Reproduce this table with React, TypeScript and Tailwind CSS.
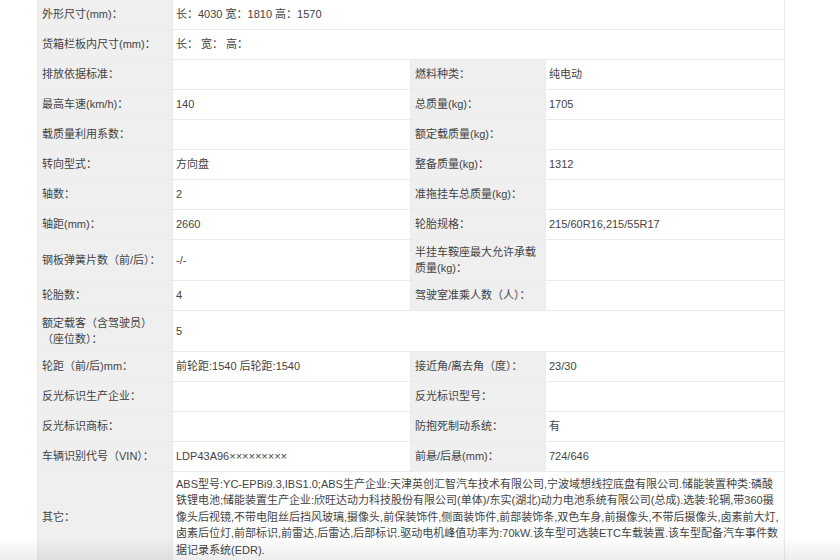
import React from 'react';

type Cell = { label: React.ReactNode; value?: React.ReactNode };
type Row = { left: Cell; right?: Cell };

const rows: Row[] = [
  { left: { label: '外形尺寸(mm)：', value: '长：4030 宽：1810 高：1570' } },
  { left: { label: '货箱栏板内尺寸(mm)：', value: '长： 宽： 高：' } },
  { left: { label: '排放依据标准：' }, right: { label: '燃料种类：', value: '纯电动' } },
  { left: { label: '最高车速(km/h)：', value: '140' }, right: { label: '总质量(kg)：', value: '1705' } },
  { left: { label: '载质量利用系数：' }, right: { label: '额定载质量(kg)：' } },
  { left: { label: '转向型式：', value: '方向盘' }, right: { label: '整备质量(kg)：', value: '1312' } },
  { left: { label: '轴数：', value: '2' }, right: { label: '准拖挂车总质量(kg)：' } },
  { left: { label: '轴距(mm)：', value: '2660' }, right: { label: '轮胎规格：', value: '215/60R16,215/55R17' } },
  {
    left: { label: '钢板弹簧片数（前/后）：', value: '-/-' },
    right: { label: <>半挂车鞍座最大允许承载<br />质量(kg)：</> },
  },
  { left: { label: '轮胎数：', value: '4' }, right: { label: '驾驶室准乘人数（人）：' } },
  { left: { label: <>额定载客（含驾驶员）<br />（座位数）：</>, value: '5' } },
  { left: { label: '轮距（前/后)mm：', value: '前轮距:1540 后轮距:1540' }, right: { label: '接近角/离去角（度）：', value: '23/30' } },
  { left: { label: '反光标识生产企业：' }, right: { label: '反光标识型号：' } },
  { left: { label: '反光标识商标：' }, right: { label: '防抱死制动系统：', value: '有' } },
  { left: { label: '车辆识别代号（VIN）：', value: 'LDP43A96×××××××××' }, right: { label: '前悬/后悬(mm)：', value: '724/646' } },
];

const otherLines = [
  'ABS型号:YC-EPBi9.3,IBS1.0;ABS生产企业:天津英创汇智汽车技术有限公司,宁波域想线控底盘有限公司.储能装置种类:磷酸',
  '铁锂电池;储能装置生产企业:欣旺达动力科技股份有限公司(单体)/东实(湖北)动力电池系统有限公司(总成).选装:轮辋,带360摄',
  '像头后视镜,不带电阻丝后挡风玻璃,摄像头,前保装饰件,侧面装饰件,前部装饰条,双色车身,前摄像头,不带后摄像头,卤素前大灯,',
  '卤素后位灯,前部标识,前雷达,后雷达,后部标识.驱动电机峰值功率为:70kW.该车型可选装ETC车载装置.该车型配备汽车事件数',
  '据记录系统(EDR).',
];

const labelCls = 'bg-[#efefef] px-1 py-[3.5px] min-h-[29px] flex items-center';
const valueCls = 'bg-white pl-[3px] pr-1 py-[3.5px] min-h-[29px] flex items-center';

export default function App() {
  return (
    <div
      className="relative h-[560px] w-[840px] overflow-hidden bg-white text-[11px] leading-[1.5] text-[#444]"
      style={{ fontFamily: '"Liberation Sans", "Noto Sans CJK SC", sans-serif' }}
    >
      <div className="ml-[37px] w-[748px] border border-[#ebebeb] border-t-0 bg-[#ebebeb] grid grid-cols-[134px_237px_134px_238px] gap-px">
        {rows.map((r, i) => (
          <React.Fragment key={i}>
            <div className={labelCls}>
              <span>{r.left.label}</span>
            </div>
            <div className={`${valueCls} ${r.right ? '' : 'col-span-3'}`}>
              <span>{r.left.value}</span>
            </div>
            {r.right && (
              <>
                <div className={labelCls}>
                  <span>{r.right.label}</span>
                </div>
                <div className={valueCls}>
                  <span>{r.right.value}</span>
                </div>
              </>
            )}
          </React.Fragment>
        ))}
        {/* 其它 */}
        <div className={labelCls}>
          <span>其它：</span>
        </div>
        <div className={`${valueCls} col-span-3`}>
          <div>
            {otherLines.map((l, i) => (
              <div key={i} className="whitespace-nowrap">
                {l}
              </div>
            ))}
          </div>
        </div>
      </div>

      {/* bottom fade from the original capture */}
      <div className="pointer-events-none absolute inset-x-0 bottom-0 h-[22px] bg-linear-to-b from-transparent to-black/[0.07]" />
    </div>
  );
}
